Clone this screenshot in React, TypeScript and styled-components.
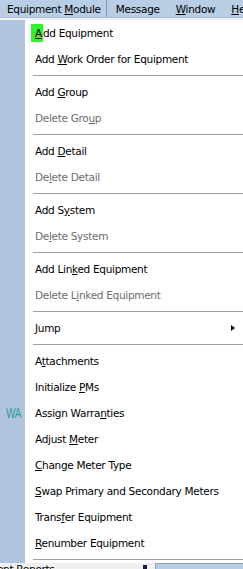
import React from "react";
import styled, { createGlobalStyle } from "styled-components";

const Global = createGlobalStyle`
  html, body { margin: 0; padding: 0; background: #ffffff; overflow: hidden; }
  body { font-family: "DejaVu Sans", "Liberation Sans", sans-serif; }
`;

const Page = styled.div`
  position: relative;
  width: 243px;
  height: 569px;
  overflow: hidden;
  display: flex;
  flex-direction: column;
  background: #ffffff;
`;

const MenuBar = styled.div`
  height: 18px;
  flex: none;
  display: flex;
  align-items: center;
  background: #b9cde5;
  border-bottom: 1px solid #a9bdd6;
  box-sizing: border-box;
  font-family: "DejaVu Sans", sans-serif;
  font-size: 10.5px;
  letter-spacing: -0.3px;
  color: #000;
  white-space: nowrap;
`;

const BarItem = styled.div<{ $divider?: boolean }>`
  padding: 0 ${(p) => (p.$divider ? "5px" : "9px")} 0 7px;
  height: 100%;
  display: flex;
  align-items: center;
  border-right: ${(p) => (p.$divider ? "1px solid #7f9db9" : "none")};
  margin-right: ${(p) => (p.$divider ? "2px" : "0")};
`;

const Workspace = styled.div`
  flex: 1;
  display: flex;
  flex-direction: column;
  justify-content: flex-end;
  background: #ffffff;
`;

const TabStrip = styled.div`
  height: 6px;
  display: flex;
  align-items: flex-start;
  overflow: hidden;
  background: #f0f0f0;
`;

const TabLabel = styled.div`
  width: 143px;
  font-family: "DejaVu Sans", sans-serif;
  font-size: 10.5px;
  letter-spacing: -0.3px;
  line-height: 11px;
  margin-top: 1px;
  text-indent: -41px;
  color: #000;
  white-space: nowrap;
  overflow: hidden;
`;

const TabMark = styled.div`
  width: 4px;
  height: 6px;
  background: #1a1a40;
  margin-top: 2px;
`;

const Panel = styled.div`
  flex: 1;
  margin-left: 8px;
  height: 6px;
  background: #b9cde5;
  border-top: 1px solid #8aa3c4;
  border-left: 1px solid #8aa3c4;
`;

const Dropdown = styled.div`
  position: absolute;
  top: 18px;
  left: 0;
  width: 260px;
  background: #ffffff;
  border-top: 2px solid #f2f2f2;
  display: flex;
  z-index: 2;
`;

const Gutter = styled.div`
  width: 25px;
  flex: none;
  background: #b0c4de;
  position: relative;
`;

const Badge = styled.div`
  position: absolute;
  left: 6px;
  top: 385px;
  font-family: "Liberation Sans", sans-serif;
  font-size: 14px;
  line-height: 16px;
  letter-spacing: -0.5px;
  color: #2a9a9a;
  transform: scaleX(0.72);
  transform-origin: left center;
`;

const List = styled.div`
  flex: 1;
  display: flex;
  flex-direction: column;
`;

const Item = styled.div<{ $disabled?: boolean }>`
  position: relative;
  height: 26px;
  display: flex;
  align-items: center;
  padding-left: 10px;
  font-family: "DejaVu Sans", sans-serif;
  font-size: 10.5px;
  letter-spacing: -0.3px;
  color: ${(p) => (p.$disabled ? "#6d6d6d" : "#000000")};
  white-space: nowrap;
`;

const Label = styled.span`
  white-space: pre;
`;

const Sep = styled.div`
  height: 7px;
  display: flex;
  align-items: center;
  padding-left: 8px;
  &::after {
    content: "";
    flex: 1;
    height: 1px;
    background: #a0a0a0;
  }
`;

const U = styled.span`
  text-decoration: underline;
  text-underline-offset: 1px;
`;

const Hot = styled.span`
  background: #2cf52c;
  padding: 3px 1px 3px 4px;
  margin-left: -4px;
`;

const Arrow = styled.div`
  position: absolute;
  left: 206px;
  top: 10px;
  width: 0;
  height: 0;
  border-top: 3.5px solid transparent;
  border-bottom: 3.5px solid transparent;
  border-left: 4px solid #000;
`;

type Entry =
  | { sep: true }
  | { pre: string; key: string; post: string; disabled?: boolean; hot?: boolean; sub?: boolean };

const entries: Entry[] = [
  { pre: "", key: "A", post: "dd Equipment", hot: true },
  { pre: "Add ", key: "W", post: "ork Order for Equipment" },
  { sep: true },
  { pre: "Add ", key: "G", post: "roup" },
  { pre: "Delete Gro", key: "u", post: "p", disabled: true },
  { sep: true },
  { pre: "Add ", key: "D", post: "etail" },
  { pre: "De", key: "l", post: "ete Detail", disabled: true },
  { sep: true },
  { pre: "Add S", key: "y", post: "stem" },
  { pre: "De", key: "l", post: "ete System", disabled: true },
  { sep: true },
  { pre: "Add Lin", key: "k", post: "ed Equipment" },
  { pre: "Delete L", key: "i", post: "nked Equipment", disabled: true },
  { sep: true },
  { pre: "", key: "J", post: "ump", sub: true },
  { sep: true },
  { pre: "A", key: "t", post: "tachments" },
  { pre: "Initialize ", key: "P", post: "Ms" },
  { pre: "Assign Warra", key: "n", post: "ties" },
  { pre: "Adjust ", key: "M", post: "eter" },
  { pre: "", key: "C", post: "hange Meter Type" },
  { pre: "", key: "S", post: "wap Primary and Secondary Meters" },
  { pre: "Trans", key: "f", post: "er Equipment" },
  { pre: "", key: "R", post: "enumber Equipment" },
  { sep: true },
];

export default function App() {
  return (
    <>
      <Global />
      <Page>
        <MenuBar>
          <BarItem $divider>
            <Label>
              Equipment <U>M</U>odule
            </Label>
          </BarItem>
          <BarItem>
            <Label>
              Messa<U>g</U>e
            </Label>
          </BarItem>
          <BarItem>
            <Label>
              <U>W</U>indow
            </Label>
          </BarItem>
          <BarItem>
            <Label>
              <U>H</U>elp
            </Label>
          </BarItem>
        </MenuBar>
        <Workspace>
          <TabStrip>
            <TabLabel>Equipment Reports</TabLabel>
            <TabMark />
            <Panel />
          </TabStrip>
        </Workspace>
        <Dropdown>
          <Gutter>
            <Badge>WA</Badge>
          </Gutter>
          <List>
            {entries.map((e, i) =>
              "sep" in e ? (
                <Sep key={i} />
              ) : (
                <Item key={i} $disabled={e.disabled}>
                  <Label>
                    {e.pre}
                    {e.hot ? (
                      <Hot>
                        <U>{e.key}</U>
                      </Hot>
                    ) : (
                      <U>{e.key}</U>
                    )}
                    {e.post}
                  </Label>
                  {e.sub && <Arrow />}
                </Item>
              )
            )}
          </List>
        </Dropdown>
      </Page>
    </>
  );
}
